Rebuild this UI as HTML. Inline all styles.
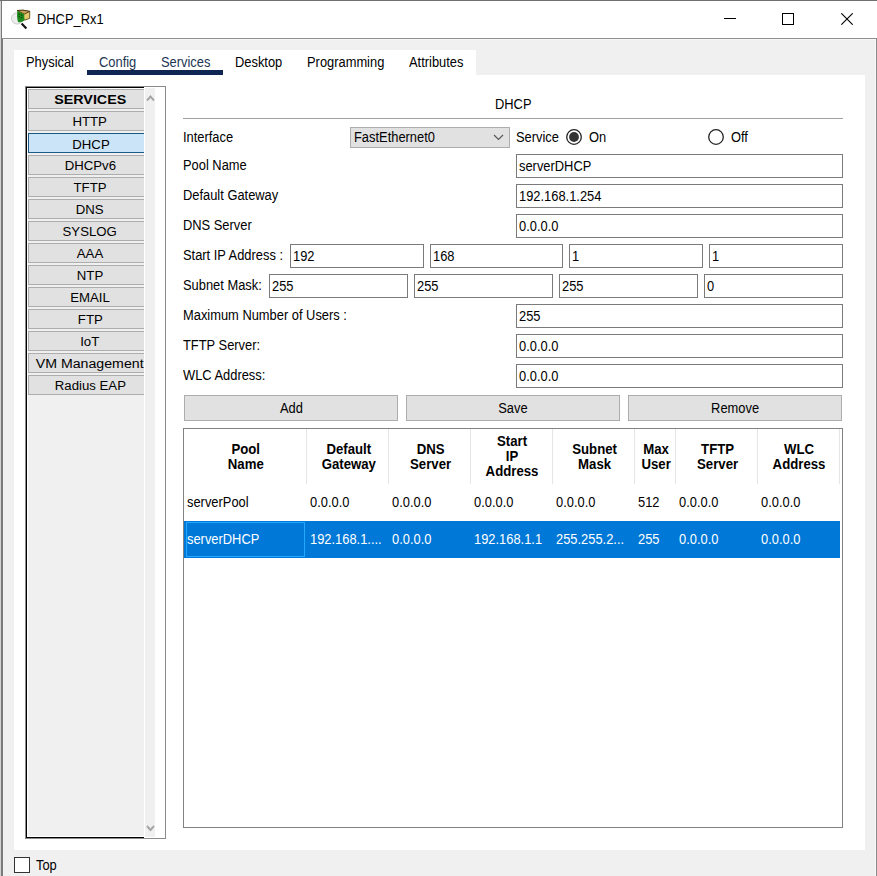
<!DOCTYPE html>
<html><head><meta charset="utf-8">
<style>
*{box-sizing:border-box;margin:0;padding:0}
html,body{width:877px;height:876px;overflow:hidden;background:#f0f0f0;font-family:"Liberation Sans",sans-serif;color:#000}
.a{position:absolute}
.t{position:absolute;white-space:nowrap;line-height:1;transform:scaleX(0.92);transform-origin:0 0}
.sx{display:inline-block;transform:scaleX(0.92);transform-origin:0 0;white-space:nowrap}
.sc{display:inline-block;transform:scaleX(0.92);transform-origin:50% 0;white-space:nowrap}
#title{left:0;top:0;width:877px;height:38px;background:#fff}
.btn{position:absolute;background:#e1e1e1;border:1px solid #adadad;font-size:14px;text-align:center}
.tb{position:absolute;background:#fff;border:1px solid #7a7a7a;font-size:14px;height:24px;padding-left:2px;line-height:22px}
.lbl{position:absolute;font-size:14px;line-height:1;white-space:nowrap;transform:scaleX(0.92);transform-origin:0 0}
.svc{position:absolute;left:1px;width:124px;height:20px;background:#e1e1e1;border:1px solid #adadad;font-size:12px;text-align:center;line-height:20px;font-family:"Liberation Sans",sans-serif;overflow:hidden;white-space:nowrap;color:#000}
.hd{position:absolute;font-size:14.5px;font-weight:bold;text-align:center;line-height:15px;white-space:nowrap}
.cell{position:absolute;font-size:14px;line-height:1;white-space:nowrap;transform:scaleX(0.92);transform-origin:0 0}
.sv{display:inline-block;transform:scaleX(1.1);transform-origin:50% 0;white-space:nowrap}
.vl{position:absolute;width:1px;background:#e5e5e5}
</style></head><body>
<!-- window frame -->
<div class="a" style="left:0;top:0;width:877px;height:1px;background:#707070"></div>
<div class="a" id="title" style="top:1px;height:37px"></div>
<div class="a" style="left:0;top:1px;width:1px;height:875px;background:#d2d2d2"></div>
<div class="a" style="left:1px;top:1px;width:1px;height:875px;background:#7a7a7a"></div>
<div class="a" style="left:2px;top:38px;width:1px;height:838px;background:#7a7a7a"></div>
<div class="a" style="left:2px;top:38px;width:875px;height:1px;background:#8f8f8f"></div>
<div class="a" style="left:876px;top:38px;width:1px;height:838px;background:#8a8a8a"></div>

<div class="a" style="left:3px;top:39px;width:872px;height:1px;background:#f7f7f7"></div>
<div class="a" style="left:875px;top:39px;width:1px;height:837px;background:#f7f9fb"></div>
<!-- title icon -->
<svg class="a" style="left:0;top:0" width="36" height="36" viewBox="0 0 36 36">
  <circle cx="17.2" cy="18.4" r="5.7" fill="#ededed" stroke="#c6c6c6" stroke-width="0.9"/>
  <path d="M21.6 23.4 L26.4 28.4" stroke="#111" stroke-width="2.1"/>
  <path d="M17.3 10.5 L23 10.2 L29.8 11.4 L29.6 18.4 L24.6 20.2 Z" fill="#e4c96c" stroke="#4a3a10" stroke-width="0.8"/>
  <path d="M17.3 10.5 L23 10.2 L29.8 11.4 L24.2 14.2 Z" fill="#c9a25a" stroke="#3c2e0c" stroke-width="0.8"/>
  <path d="M17.4 11 L24.2 14.2 L24.4 20.2 C23 21.5 21 22.3 18.2 22.3 C16.9 19 16.8 14.6 17.4 11 Z" fill="#1e8a1a"/>
  <path d="M18.6 14.2 h1.3 M20.9 15.2 h1.3 M18.6 16.8 h1.3 M20.9 17.6 h1.3" stroke="#0a3a08" stroke-width="1"/>
</svg>
<div class="t" style="left:37px;top:12px;font-size:14px;color:#000">DHCP_Rx1</div>

<!-- window controls -->
<div class="a" style="left:724px;top:18px;width:12px;height:1px;background:#000"></div>
<div class="a" style="left:782px;top:13px;width:12px;height:12px;border:1px solid #000"></div>
<svg class="a" style="left:841px;top:13px" width="12" height="12" viewBox="0 0 12 12"><path d="M0.3 0.3 L11.7 11.7 M11.7 0.3 L0.3 11.7" stroke="#000" stroke-width="1.1"/></svg>

<!-- tab bar -->
<div class="a" style="left:14px;top:50px;width:462px;height:25px;background:#fff"></div>
<div class="t" style="left:26px;top:55px;font-size:14px">Physical</div>
<div class="t" style="left:99px;top:55px;font-size:14px;color:#1c3553">Config</div>
<div class="t" style="left:161px;top:55px;font-size:14px;color:#1c3553">Services</div>
<div class="t" style="left:235px;top:55px;font-size:14px">Desktop</div>
<div class="t" style="left:307px;top:55px;font-size:14px">Programming</div>
<div class="t" style="left:409px;top:55px;font-size:14px">Attributes</div>
<div class="a" style="left:87px;top:70px;width:136px;height:5px;background:#0f2552"></div>

<!-- main white panel -->
<div class="a" style="left:14px;top:75px;width:851px;height:775px;background:#fff"></div>

<!-- services list frame -->
<div class="a" style="left:25px;top:86px;width:141px;height:753px;border:1px solid #8a8a8a;background:#fff"></div>
<div class="a" style="left:26px;top:87px;width:118px;height:751px;border:1px solid #000;border-right:none;background:#f0f0f0;overflow:hidden">
<div class="a" style="left:0;top:0;width:118px;height:1px;background:#fff"></div>
<div class="a" style="left:0;top:0;width:1px;height:749px;background:#fff"></div>
<div class="a" style="left:0;top:748px;width:118px;height:1px;background:#fff"></div>
<div class="svc" style="top:1px;font-weight:bold"><span class="sv" style="transform:scaleX(1.19)">SERVICES</span></div>
<div class="svc" style="top:23px"><span class="sv" style="transform:scaleX(1.1)">HTTP</span></div>
<div class="svc" style="top:45px;background:#cce4f7;border-color:#1b5a86"><span class="sv" style="transform:scaleX(1.1);position:relative;left:1px;top:1px">DHCP</span></div>
<div class="svc" style="top:67px"><span class="sv" style="transform:scaleX(1.1)">DHCPv6</span></div>
<div class="svc" style="top:89px"><span class="sv" style="transform:scaleX(1.1)">TFTP</span></div>
<div class="svc" style="top:111px"><span class="sv" style="transform:scaleX(1.1)">DNS</span></div>
<div class="svc" style="top:133px"><span class="sv" style="transform:scaleX(1.1)">SYSLOG</span></div>
<div class="svc" style="top:155px"><span class="sv" style="transform:scaleX(1.1)">AAA</span></div>
<div class="svc" style="top:177px"><span class="sv" style="transform:scaleX(1.1)">NTP</span></div>
<div class="svc" style="top:199px"><span class="sv" style="transform:scaleX(1.1)">EMAIL</span></div>
<div class="svc" style="top:221px"><span class="sv" style="transform:scaleX(1.1)">FTP</span></div>
<div class="svc" style="top:243px"><span class="sv" style="transform:scaleX(1.1)">IoT</span></div>
<div class="svc" style="top:265px"><span class="sv" style="transform:scaleX(1.18)">VM Management</span></div>
<div class="svc" style="top:287px"><span class="sv" style="transform:scaleX(1.1)">Radius EAP</span></div>
</div>
<div class="a" style="left:144px;top:87px;width:21px;height:1px;background:#fff"></div>
<div class="a" style="left:144px;top:88px;width:1px;height:749px;background:#fff"></div>
<div class="a" style="left:145px;top:88px;width:10px;height:749px;background:#f0f0f0"></div>
<svg class="a" style="left:146px;top:94px" width="9" height="8" viewBox="0 0 9 8"><path d="M1 6.5 L4.5 2.5 L8 6.5" fill="none" stroke="#a6a6a6" stroke-width="1.9"/></svg>
<svg class="a" style="left:146px;top:824px" width="9" height="8" viewBox="0 0 9 8"><path d="M1 2 L4.5 6 L8 2" fill="none" stroke="#a6a6a6" stroke-width="1.9"/></svg>

<!-- DHCP panel -->
<div class="t" style="left:495px;top:97px;font-size:14px">DHCP</div>
<div class="a" style="left:183px;top:118px;width:660px;height:1px;background:#a0a0a0"></div>

<div class="lbl" style="left:183px;top:130px">Interface</div>
<div class="a" style="left:350px;top:127px;width:160px;height:21px;background:#e1e1e1;border:1px solid #adadad"></div>
<div class="t" style="left:354px;top:130px;font-size:14px">FastEthernet0</div>
<svg class="a" style="left:493px;top:134px" width="11" height="7" viewBox="0 0 11 7"><path d="M1 1 L5.5 5.5 L10 1" fill="none" stroke="#555" stroke-width="1.1"/></svg>
<div class="lbl" style="left:516px;top:130px">Service</div>
<svg class="a" style="left:565px;top:128px" width="18" height="18" viewBox="0 0 18 18"><circle cx="9" cy="9" r="7.3" fill="#fff" stroke="#222" stroke-width="1.3"/><circle cx="9" cy="9" r="4.9" fill="#333"/></svg>
<div class="lbl" style="left:589px;top:130px">On</div>
<svg class="a" style="left:707px;top:128px" width="18" height="18" viewBox="0 0 18 18"><circle cx="9" cy="9" r="7.3" fill="#fff" stroke="#222" stroke-width="1.3"/></svg>
<div class="lbl" style="left:731px;top:130px">Off</div>

<div class="lbl" style="left:183px;top:158px">Pool Name</div>
<div class="tb" style="left:516px;top:154px;width:327px"><span class="sx">serverDHCP</span></div>
<div class="lbl" style="left:183px;top:188px">Default Gateway</div>
<div class="tb" style="left:516px;top:184px;width:327px"><span class="sx">192.168.1.254</span></div>
<div class="lbl" style="left:183px;top:218px">DNS Server</div>
<div class="tb" style="left:516px;top:214px;width:327px"><span class="sx">0.0.0.0</span></div>

<div class="lbl" style="left:183px;top:248px">Start IP Address :</div>
<div class="tb" style="left:290px;top:244px;width:134px"><span class="sx">192</span></div>
<div class="tb" style="left:430px;top:244px;width:133px"><span class="sx">168</span></div>
<div class="tb" style="left:569px;top:244px;width:134px"><span class="sx">1</span></div>
<div class="tb" style="left:709px;top:244px;width:134px"><span class="sx">1</span></div>

<div class="lbl" style="left:183px;top:278px">Subnet Mask:</div>
<div class="tb" style="left:269px;top:274px;width:139px"><span class="sx">255</span></div>
<div class="tb" style="left:414px;top:274px;width:139px"><span class="sx">255</span></div>
<div class="tb" style="left:559px;top:274px;width:139px"><span class="sx">255</span></div>
<div class="tb" style="left:704px;top:274px;width:139px"><span class="sx">0</span></div>

<div class="lbl" style="left:183px;top:308px">Maximum Number of Users :</div>
<div class="tb" style="left:516px;top:304px;width:327px"><span class="sx">255</span></div>
<div class="lbl" style="left:183px;top:338px">TFTP Server:</div>
<div class="tb" style="left:516px;top:334px;width:327px"><span class="sx">0.0.0.0</span></div>
<div class="lbl" style="left:183px;top:368px">WLC Address:</div>
<div class="tb" style="left:516px;top:364px;width:327px"><span class="sx">0.0.0.0</span></div>

<div class="btn" style="left:184px;top:395px;width:214px;height:26px;line-height:24px"><span class="sc">Add</span></div>
<div class="btn" style="left:406px;top:395px;width:214px;height:26px;line-height:24px"><span class="sc">Save</span></div>
<div class="btn" style="left:628px;top:395px;width:214px;height:26px;line-height:24px"><span class="sc">Remove</span></div>

<!-- table -->
<div class="a" style="left:183px;top:428px;width:660px;height:400px;border:1px solid #828282;background:#fff"></div>
<div class="vl" style="left:306px;top:429px;height:55px"></div>
<div class="vl" style="left:388px;top:429px;height:55px"></div>
<div class="vl" style="left:470px;top:429px;height:55px"></div>
<div class="vl" style="left:552px;top:429px;height:55px"></div>
<div class="vl" style="left:634px;top:429px;height:55px"></div>
<div class="vl" style="left:675px;top:429px;height:55px"></div>
<div class="vl" style="left:757px;top:429px;height:55px"></div>
<div class="vl" style="left:839px;top:429px;height:55px"></div>

<div class="hd" style="left:185px;top:442px;width:122px"><span class="sc" style="transform:scaleX(0.91)">Pool<br>Name</span></div>
<div class="hd" style="left:308px;top:442px;width:81px"><span class="sc" style="transform:scaleX(0.91)">Default<br>Gateway</span></div>
<div class="hd" style="left:390px;top:442px;width:81px"><span class="sc" style="transform:scaleX(0.91)">DNS<br>Server</span></div>
<div class="hd" style="left:472px;top:434px;width:81px"><span class="sc" style="transform:scaleX(0.91)">Start<br>IP<br>Address</span></div>
<div class="hd" style="left:554px;top:442px;width:81px"><span class="sc" style="transform:scaleX(0.91)">Subnet<br>Mask</span></div>
<div class="hd" style="left:636px;top:442px;width:40px"><span class="sc" style="transform:scaleX(0.91)">Max<br>User</span></div>
<div class="hd" style="left:677px;top:442px;width:81px"><span class="sc" style="transform:scaleX(0.91)">TFTP<br>Server</span></div>
<div class="hd" style="left:759px;top:442px;width:81px"><span class="sc" style="transform:scaleX(0.91)">WLC<br>Address</span></div>

<div class="cell" style="left:187px;top:495px">serverPool</div>
<div class="cell" style="left:310px;top:495px">0.0.0.0</div>
<div class="cell" style="left:392px;top:495px">0.0.0.0</div>
<div class="cell" style="left:474px;top:495px">0.0.0.0</div>
<div class="cell" style="left:556px;top:495px">0.0.0.0</div>
<div class="cell" style="left:638px;top:495px">512</div>
<div class="cell" style="left:679px;top:495px">0.0.0.0</div>
<div class="cell" style="left:761px;top:495px">0.0.0.0</div>

<div class="a" style="left:184px;top:521px;width:656px;height:37px;background:#0078d7"></div>
<div class="a" style="left:186px;top:522px;width:119px;height:35px;border:1px solid #22a8ff"></div>
<div class="cell" style="left:187px;top:532px;color:#fff">serverDHCP</div>
<div class="cell" style="left:310px;top:532px;color:#fff">192.168.1....</div>
<div class="cell" style="left:392px;top:532px;color:#fff">0.0.0.0</div>
<div class="cell" style="left:474px;top:532px;color:#fff">192.168.1.1</div>
<div class="cell" style="left:556px;top:532px;color:#fff">255.255.2...</div>
<div class="cell" style="left:638px;top:532px;color:#fff">255</div>
<div class="cell" style="left:679px;top:532px;color:#fff">0.0.0.0</div>
<div class="cell" style="left:761px;top:532px;color:#fff">0.0.0.0</div>

<!-- bottom -->
<div class="a" style="left:14px;top:857px;width:16px;height:16px;border:1px solid #333;background:#fff"></div>
<div class="t" style="left:36px;top:858px;font-size:14px">Top</div>
</body></html>
